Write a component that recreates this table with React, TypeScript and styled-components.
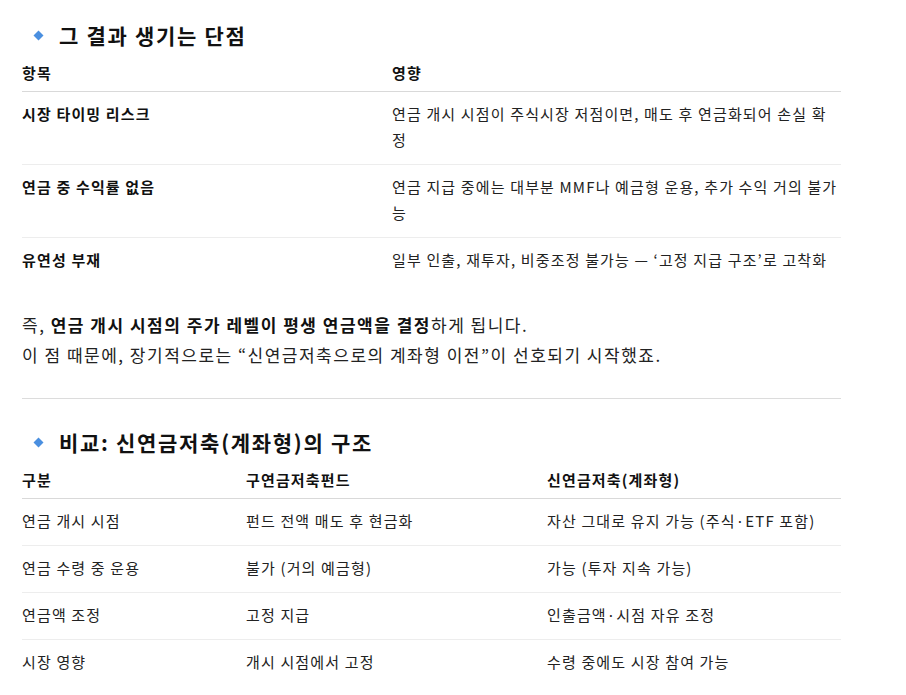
import styled, { createGlobalStyle } from "styled-components";

const GlobalStyle = createGlobalStyle`
  body {
    margin: 0;
    background: #fff;
    font-family: "Noto Sans CJK KR", "Noto Sans", sans-serif;
    color: #222;
  }
`;

const drawbacks = [
  { item: "시장 타이밍 리스크", effect: "연금 개시 시점이 주식시장 저점이면, 매도 후 연금화되어 손실 확정" },
  { item: "연금 중 수익률 없음", effect: "연금 지급 중에는 대부분 MMF나 예금형 운용, 추가 수익 거의 불가능" },
  { item: "유연성 부재", effect: "일부 인출, 재투자, 비중조정 불가능 — ‘고정 지급 구조’로 고착화" },
];

const compare = [
  ["연금 개시 시점", "펀드 전액 매도 후 현금화", "자산 그대로 유지 가능 (주식·ETF 포함)"],
  ["연금 수령 중 운용", "불가 (거의 예금형)", "가능 (투자 지속 가능)"],
  ["연금액 조정", "고정 지급", "인출금액·시점 자유 조정"],
  ["시장 영향", "개시 시점에서 고정", "수령 중에도 시장 참여 가능"],
];

const Diamond = () => (
  <svg width="11" height="11" viewBox="0 0 11 11">
    <path d="M5.5 0.5 L10.5 5.5 L5.5 10.5 L0.5 5.5 Z" fill="#4a8fe0" />
  </svg>
);

const App = () => {
  return (
    <StPage>
      <GlobalStyle />
      <StHeading>
        <Diamond />
        <span>그 결과 생기는 단점</span>
      </StHeading>
      <StTable $cols="370px 1fr">
        <StHead>항목</StHead>
        <StHead>영향</StHead>
        {drawbacks.map((row, i) => (
          <StRow key={i} $last={i === drawbacks.length - 1}>
            <StCell $bold>{row.item}</StCell>
            <StCell>{row.effect}</StCell>
          </StRow>
        ))}
      </StTable>

      <StText>
        <p>
          즉, <b>연금 개시 시점의 주가 레벨이 평생 연금액을 결정</b>하게 됩니다.
        </p>
        <p>이 점 때문에, 장기적으로는 “신연금저축으로의 계좌형 이전”이 선호되기 시작했죠.</p>
      </StText>

      <StRule />

      <StHeading>
        <Diamond />
        <span>비교: 신연금저축(계좌형)의 구조</span>
      </StHeading>
      <StTable $cols="224px 301px 1fr">
        <StHead>구분</StHead>
        <StHead>구연금저축펀드</StHead>
        <StHead>신연금저축(계좌형)</StHead>
        {compare.map((row, i) => (
          <StRow key={i} $last={i === compare.length - 1}>
            {row.map((c, j) => (
              <StCell key={j}>{c}</StCell>
            ))}
          </StRow>
        ))}
      </StTable>
    </StPage>
  );
};
export default App;

const StPage = styled.div`
  width: 819px;
  padding: 20px 0 0 22px;
`;
const StHeading = styled.h3`
  display: flex;
  align-items: center;
  gap: 15px;
  margin: 0 0 8px;
  padding-left: 11px;
  font-size: 21px;
  font-weight: 700;
  line-height: 30px;
  letter-spacing: 1.7px;
  color: #111;
  svg {
    flex: none;
  }
`;
const StTable = styled.div<{ $cols: string }>`
  display: grid;
  grid-template-columns: ${(props) => props.$cols};
  font-size: 15px;
  line-height: 26px;
  letter-spacing: 1.15px;
`;
const StHead = styled.div`
  padding: 2px 0 5px;
  font-weight: 700;
  color: #111;
  border-bottom: 1px solid #d9d9d9;
`;
const StRow = styled.div<{ $last?: boolean }>`
  display: contents;
  & > div {
    border-bottom: ${(props) => (props.$last ? "0" : "1px solid #ededed")};
  }
`;
const StCell = styled.div<{ $bold?: boolean }>`
  padding: 9px 0 11px;
  font-weight: ${(props) => (props.$bold ? 700 : 400)};
  color: ${(props) => (props.$bold ? "#111" : "#222")};
`;
const StText = styled.div`
  margin-top: 26px;
  font-size: 17px;
  line-height: 30px;
  letter-spacing: 1.5px;
  color: #222;
  p {
    margin: 0;
  }
  b {
    font-weight: 700;
    color: #111;
  }
`;
const StRule = styled.hr`
  margin: 28px 0 28px;
  border: 0;
  border-top: 1px solid #dcdcdc;
`;
